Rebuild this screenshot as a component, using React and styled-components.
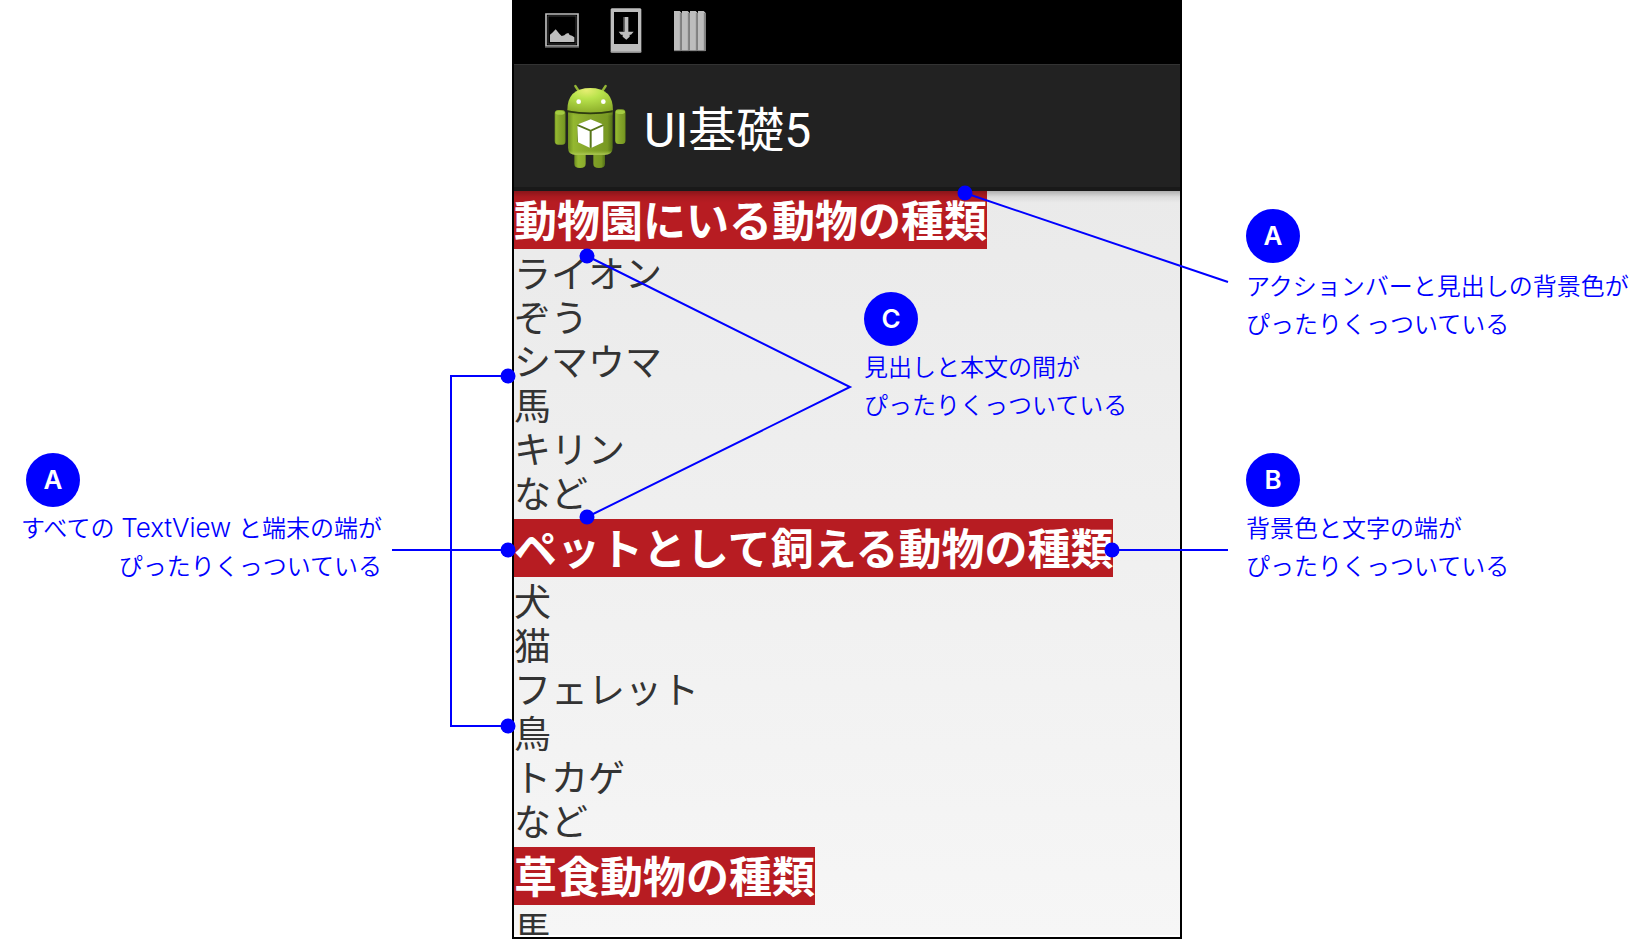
import React from "react";
import styled, { createGlobalStyle } from "styled-components";

const GlobalStyle = createGlobalStyle`
  * { box-sizing: border-box; }
  body {
    margin: 0;
    background: #fff;
    font-family: Inter, "Noto Sans CJK JP", sans-serif;
  }
`;

const Page = styled.main`
  display: grid;
  grid-template-columns: minmax(0, 512fr) 670px minmax(0, 462fr);
  height: 100vh;
  overflow: hidden;
`;

const LeftNotes = styled.aside`
  padding: 453px 130px 0 26px;
`;

const RightNotes = styled.aside`
  display: flex;
  flex-direction: column;
  gap: 109px;
  padding: 209px 0 0 64px;
`;

const NoteBox = styled.section`
  display: flex;
  flex-direction: column;
  align-items: ${(p) => (p.$align === "right" ? "flex-end" : "flex-start")};
  gap: ${(p) => (p.$roomy ? 5 : 3)}px;
`;

const Badge = styled.span`
  display: flex;
  align-items: center;
  justify-content: center;
  align-self: flex-start;
  width: 54px;
  height: 54px;
  border-radius: 50%;
  background: #00f;
  color: #fff;
  font-size: 26px;
  font-weight: 600;
  line-height: 52px;
`;

const NoteText = styled.p`
  margin: 0;
  color: #00f;
  font-size: 24px;
  font-weight: 350;
  line-height: 38px;
  white-space: nowrap;
  text-align: ${(p) => p.$align || "left"};
`;

const Latin = styled.span`
  font-size: 26px;
  font-weight: 300;
  line-height: 1;
`;

const Phone = styled.div`
  position: relative;
  display: flex;
  flex-direction: column;
  height: calc(100vh - 2px);
  border: 2px solid #000;
  border-top: 0;
  padding-bottom: 2px;
  background: #fff;
`;

const StatusBar = styled.div`
  display: flex;
  flex: none;
  align-items: center;
  gap: 31px;
  height: 64px;
  padding: 0 0 3px 31px;
  background: #000;
`;

const ActionBar = styled.header`
  display: flex;
  flex: none;
  align-items: center;
  gap: 18px;
  height: 127px;
  padding-left: 40px;
  background: #222;
  border-top: 1px solid #333;
  border-bottom: 4px solid #191919;
`;

const Title = styled.h1`
  margin: 0;
  padding-top: 10px;
  color: #fff;
  font-family: Roboto, "Noto Sans CJK JP", sans-serif;
  font-size: 48px;
  font-weight: 400;
  line-height: 64px;
`;

const Content = styled.div`
  position: relative;
  flex: 1;
  min-height: 0;
  overflow: hidden;
  background: linear-gradient(#eaeaea, #f6f6f6);
  font-family: "Noto Sans CJK JP", sans-serif;

  &::before {
    content: "";
    position: absolute;
    inset: 0 0 auto;
    height: 12px;
    background: linear-gradient(rgba(0, 0, 0, 0.25), rgba(0, 0, 0, 0.06) 50%, transparent);
  }
`;

const Heading = styled.h2`
  width: fit-content;
  margin: 0;
  padding-bottom: 4px;
  background: #b71c22;
  color: #fff;
  font-size: 43px;
  font-weight: 700;
  line-height: 54px;
  white-space: nowrap;
`;

const List = styled.ul`
  margin: 0;
  padding: 1px 0 5px;
  list-style: none;
  color: #333;
  font-size: 37px;
  line-height: 44px;
`;

const Connectors = styled.svg`
  position: absolute;
  top: 0;
  left: 0;
  width: 666px;
  height: 100%;
  overflow: visible;
  pointer-events: none;
`;

const InnerNote = styled.div`
  position: absolute;
  top: 292px;
  left: 350px;
`;

const Icon = styled.svg`
  display: block;
  flex: none;
`;

const sections = [
  {
    heading: "動物園にいる動物の種類",
    items: ["ライオン", "ぞう", "シマウマ", "馬", "キリン", "など"],
  },
  {
    heading: "ペットとして飼える動物の種類",
    items: ["犬", "猫", "フェレット", "鳥", "トカゲ", "など"],
  },
  { heading: "草食動物の種類", items: ["馬"] },
];

function Note({ label, lines, align, roomy }) {
  return (
    <NoteBox $align={align} $roomy={roomy}>
      <Badge>{label}</Badge>
      <NoteText $align={align}>
        {lines[0]}
        <br />
        {lines[1]}
      </NoteText>
    </NoteBox>
  );
}

function PictureIcon() {
  return (
    <Icon width="34" height="35" viewBox="120 39 102 105" aria-hidden="true">
      <path d="M123 42H219V138H123Z" fill="none" stroke="#bdbdbd" strokeWidth="5" />
      <path d="M120 141H222" stroke="#666" strokeWidth="5" />
      <path d="M129 48H213V132H129Z" fill="none" stroke="#555" strokeWidth="2" />
      <path d="M135 126V104L142 98L147 93L152 88L157 94L163 101L170 108L178 106L183 101L190 99L194 105L201 107L208 112V126Z" fill="#bdbdbd" />
    </Icon>
  );
}

function DownloadIcon() {
  return (
    <Icon width="32" height="45" viewBox="315 24 96 135" aria-hidden="true">
      <path fillRule="evenodd" d="M320 25H406L409 28V156L406 158H320L317 156V28ZM327 36V132H399V36Z" fill="#bdbdbd" />
      <path d="M317 156H409" stroke="#888" strokeWidth="3" />
      <path d="M357 51H370V95H386L378 104H374V110L364 119L353 110V104H348L341 95H357Z" fill="#bdbdbd" />
      <path d="M357 51V95" stroke="#555" strokeWidth="5" />
    </Icon>
  );
}

function BarsIcon() {
  return (
    <Icon width="34" height="42" viewBox="504 27 102 126" aria-hidden="true">
      {[507, 531, 555, 579].map((x) => (
        <g key={x}>
          <path d={`M${x} 30H${x + 17}L${x + 23} 36V150H${x}Z`} fill="#bdbdbd" />
          <path d={`M${x + 20} 36V150`} stroke="#858585" strokeWidth="5" />
          <path d={`M${x} 149H${x + 22}`} stroke="#777" strokeWidth="3" />
        </g>
      ))}
    </Icon>
  );
}

function RobotIcon() {
  return (
    <Icon width="72" height="85" viewBox="147 255 216 255" aria-hidden="true">
      <defs>
        <radialGradient id="head" cx="0.42" cy="0.1" r="0.95">
          <stop offset="0" stopColor="#e6ee72" />
          <stop offset="0.35" stopColor="#b9e34c" />
          <stop offset="1" stopColor="#89aa28" />
        </radialGradient>
        <linearGradient id="body" x1="0" x2="1">
          <stop offset="0" stopColor="#6d8d20" />
          <stop offset="0.12" stopColor="#94b830" />
          <stop offset="0.45" stopColor="#86a62b" />
          <stop offset="0.88" stopColor="#789922" />
          <stop offset="1" stopColor="#526e17" />
        </linearGradient>
        <linearGradient id="belly" x1="0" x2="0" y1="0" y2="1">
          <stop offset="0" stopColor="#6c8b1e" />
          <stop offset="0.12" stopColor="#8bad2b" stopOpacity="0" />
          <stop offset="0.9" stopColor="#8eb22f" stopOpacity="0" />
          <stop offset="1" stopColor="#b3cf5a" />
        </linearGradient>
      </defs>
      <path d="M211 261L221 276M302 261L292 276" stroke="#94b536" strokeWidth="7" strokeLinecap="round" />
      <path d="M208 460H242V494Q242 507 225 507Q208 507 208 494ZM265 460H300V494Q300 507 282 507Q265 507 265 494Z" fill="url(#body)" />
      <rect x="149" y="333" width="33" height="104" rx="11" fill="url(#body)" />
      <rect x="330" y="331" width="32" height="104" rx="11" fill="url(#body)" />
      <ellipse cx="165" cy="341" rx="14" ry="6" fill="#a4cc42" />
      <ellipse cx="346" cy="339" rx="14" ry="6" fill="#a4cc42" />
      <path d="M189 335H323V446Q323 467 299 467H212Q189 467 189 446Z" fill="url(#body)" />
      <path d="M189 335H323V446Q323 467 299 467H212Q189 467 189 446Z" fill="url(#belly)" />
      <path d="M187 334Q187 267 256 267Q324 267 324 334Q294 341 256 341Q215 341 187 334Z" fill="url(#head)" />
      <path d="M188 337Q256 349 323 337" fill="none" stroke="#2d3b10" strokeWidth="5" />
      <circle cx="221" cy="308" r="7" fill="#fff" />
      <circle cx="295" cy="308" r="7" fill="#fff" />
      <path d="M257 361L295 378V428L258 446L217 428V378Z" fill="#58761a" />
      <path d="M257 361L293 376L257 392L219 376ZM217 381L254 397V446L219 430ZM260 397L295 381V430L260 446Z" fill="#fff" />
    </Icon>
  );
}

/* Coordinates are relative to the inside of the phone frame. */
const dots = [
  [451, 193],
  [73, 256],
  [73, 517],
  [598, 550],
  [-6, 376],
  [-6, 550],
  [-6, 726],
];

export default function App() {
  return (
    <>
      <GlobalStyle />
      <Page>
        <LeftNotes>
          <Note
            label="A"
            align="right"
            lines={[
              <React.Fragment key="first">
                すべての <Latin>TextView</Latin> と端末の端が
              </React.Fragment>,
              "ぴったりくっついている",
            ]}
          />
        </LeftNotes>
        <Phone>
          <StatusBar>
            <PictureIcon />
            <DownloadIcon />
            <BarsIcon />
          </StatusBar>
          <ActionBar>
            <RobotIcon />
            <Title>UI基礎5</Title>
          </ActionBar>
          <Content>
            {sections.map((s) => (
              <section key={s.heading}>
                <Heading>{s.heading}</Heading>
                <List>
                  {s.items.map((item) => (
                    <li key={item}>{item}</li>
                  ))}
                </List>
              </section>
            ))}
          </Content>
          <Connectors aria-hidden="true">
            <g fill="none" stroke="#00f" strokeWidth="2">
              <path d="M451 193L714 282" />
              <path d="M73 256L336 387L73 517" />
              <path d="M598 550H714" />
              <path d="M-6 376H-63V726H-6M-122 550H-6" />
            </g>
            {dots.map(([x, y]) => (
              <circle key={`${x},${y}`} cx={x} cy={y} r="7.5" fill="#00f" />
            ))}
          </Connectors>
          <InnerNote>
            <Note label="C" lines={["見出しと本文の間が", "ぴったりくっついている"]} />
          </InnerNote>
        </Phone>
        <RightNotes>
          <Note
            label="A"
            roomy
            lines={["アクションバーと見出しの背景色が", "ぴったりくっついている"]}
          />
          <Note label="B" lines={["背景色と文字の端が", "ぴったりくっついている"]} />
        </RightNotes>
      </Page>
    </>
  );
}
